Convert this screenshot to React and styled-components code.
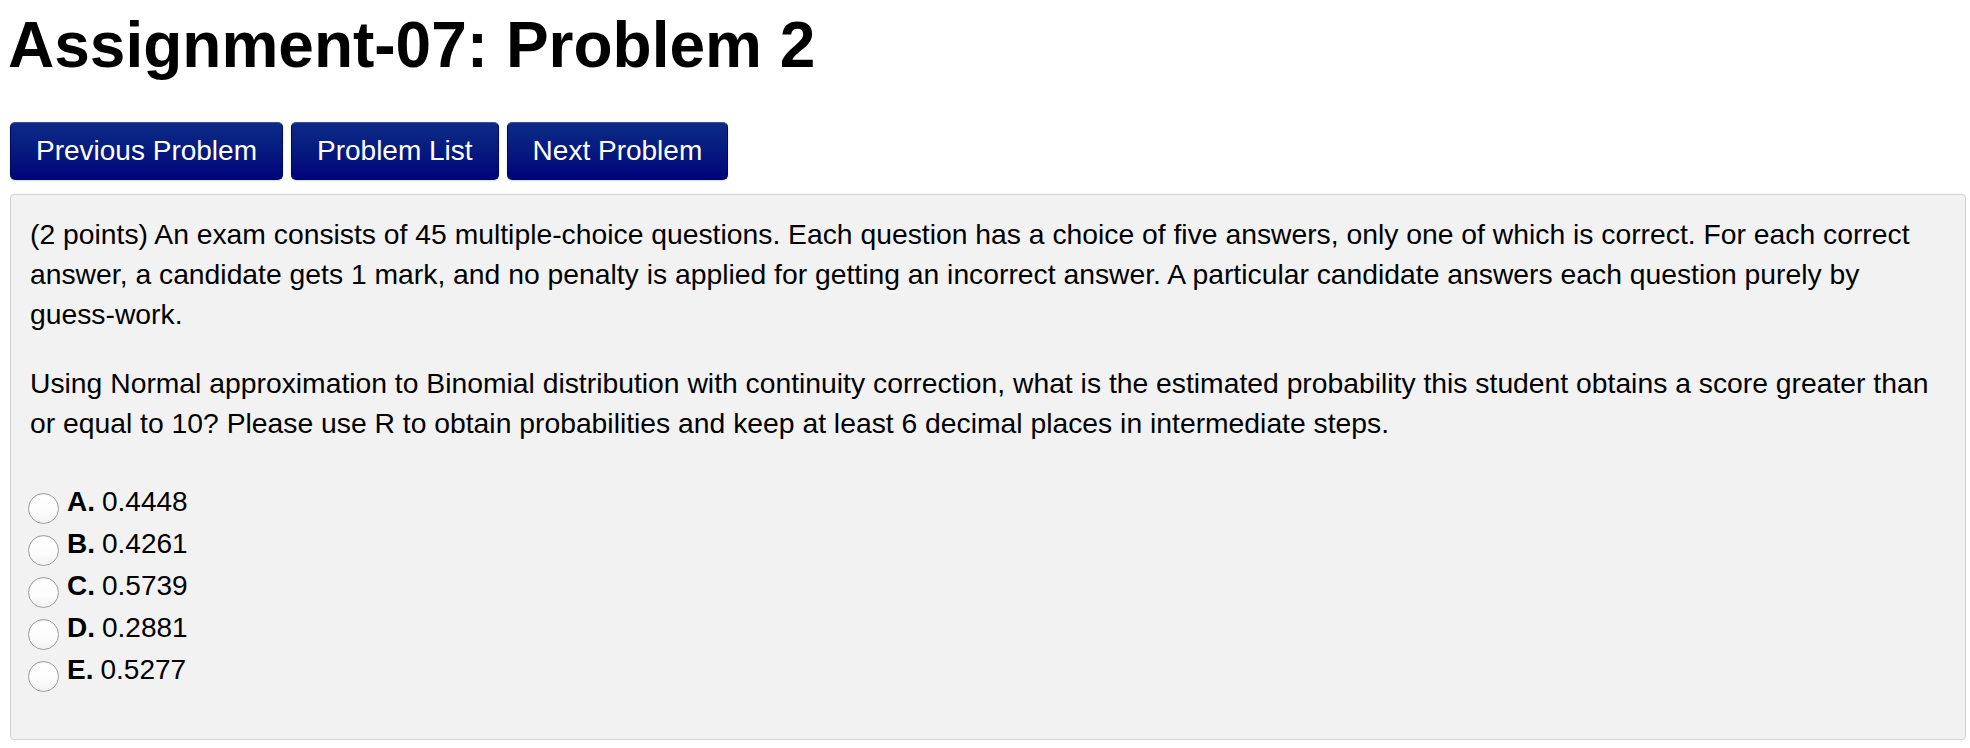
import React from 'react';
import styled, { createGlobalStyle } from 'styled-components';

const Global = createGlobalStyle`
  body {
    margin: 0;
    background: #fff;
    font-family: "Liberation Sans", Arial, Helvetica, sans-serif;
    color: #000;
  }
`;

const Page = styled.div`
  padding: 0 4px 0 10px;
`;

const Title = styled.h2`
  margin: 0;
  padding-top: 10px;
  height: 112px;
  font-size: 64px;
  line-height: 70px;
  font-weight: bold;
  margin-left: -2px;
`;

const NavBar = styled.div`
  display: flex;
  gap: 8px;
  margin-bottom: 14px;
`;

const NavButton = styled.a`
  display: flex;
  align-items: center;
  height: 58px;
  padding: 0 ${p => p.pad}px;
  box-sizing: border-box;
  border-radius: 5px;
  border: 1px solid #00085c;
  border-top-color: #3a4f9e;
  background: linear-gradient(to bottom, #0c2a86 0%, #061c80 45%, #00037a 100%);
  color: #fff;
  font-size: 28px;
  text-decoration: none;
  box-shadow: 0 1px 2px rgba(0, 0, 0, 0.15);
`;

const Panel = styled.div`
  box-sizing: border-box;
  min-height: 546px;
  background: #f2f2f2;
  border: 1px solid #d3d3d3;
  border-radius: 4px;
  padding: 19px 19px 20px 19px;
  font-size: 28.3px;
  line-height: 40px;
  box-shadow: 0 -1px 2px rgba(0, 0, 0, 0.04);
`;

const Para = styled.p`
  margin: 0 0 29px 0;
`;

const Choices = styled.div`
  margin-top: 38px;
  display: flex;
  flex-direction: column;
`;

const Choice = styled.label`
  display: flex;
  align-items: center;
  height: 42px;
  font-size: 28px;
`;

const Radio = styled.span`
  width: 31px;
  height: 31px;
  box-sizing: border-box;
  border-radius: 50%;
  border: 1px solid #9e9e9e;
  background: linear-gradient(to bottom, #ffffff 0%, #fcfcfc 60%, #f3f3f3 100%);
  box-shadow: inset 0 1px 1px rgba(0, 0, 0, 0.08);
  margin: 12px 8px 0 -2px;
  flex-shrink: 0;
`;

const Letter = styled.b`
  margin-right: 7px;
`;

const choices = [
  ['A.', '0.4448'],
  ['B.', '0.4261'],
  ['C.', '0.5739'],
  ['D.', '0.2881'],
  ['E.', '0.5277'],
];

export default function App() {
  return (
    <Page>
      <Global />
      <Title>Assignment-07: Problem 2</Title>
      <NavBar>
        <NavButton pad={25}>Previous Problem</NavButton>
        <NavButton pad={25}>Problem List</NavButton>
        <NavButton pad={25}>Next Problem</NavButton>
      </NavBar>
      <Panel>
        <Para>
          (2 points) An exam consists of 45 multiple-choice questions. Each question has a choice of five answers, only one of which is correct. For each correct answer, a candidate gets 1 mark, and no penalty is applied for getting an incorrect answer. A particular candidate answers each question purely by guess-work.
        </Para>
        <Para>
          Using Normal approximation to Binomial distribution with continuity correction, what is the estimated probability this student obtains a score greater than or equal to 10? Please use R to obtain probabilities and keep at least 6 decimal places in intermediate steps.
        </Para>
        <Choices>
          {choices.map(([l, v]) => (
            <Choice key={l}>
              <Radio />
              <Letter>{l}</Letter>
              {v}
            </Choice>
          ))}
        </Choices>
      </Panel>
    </Page>
  );
}
